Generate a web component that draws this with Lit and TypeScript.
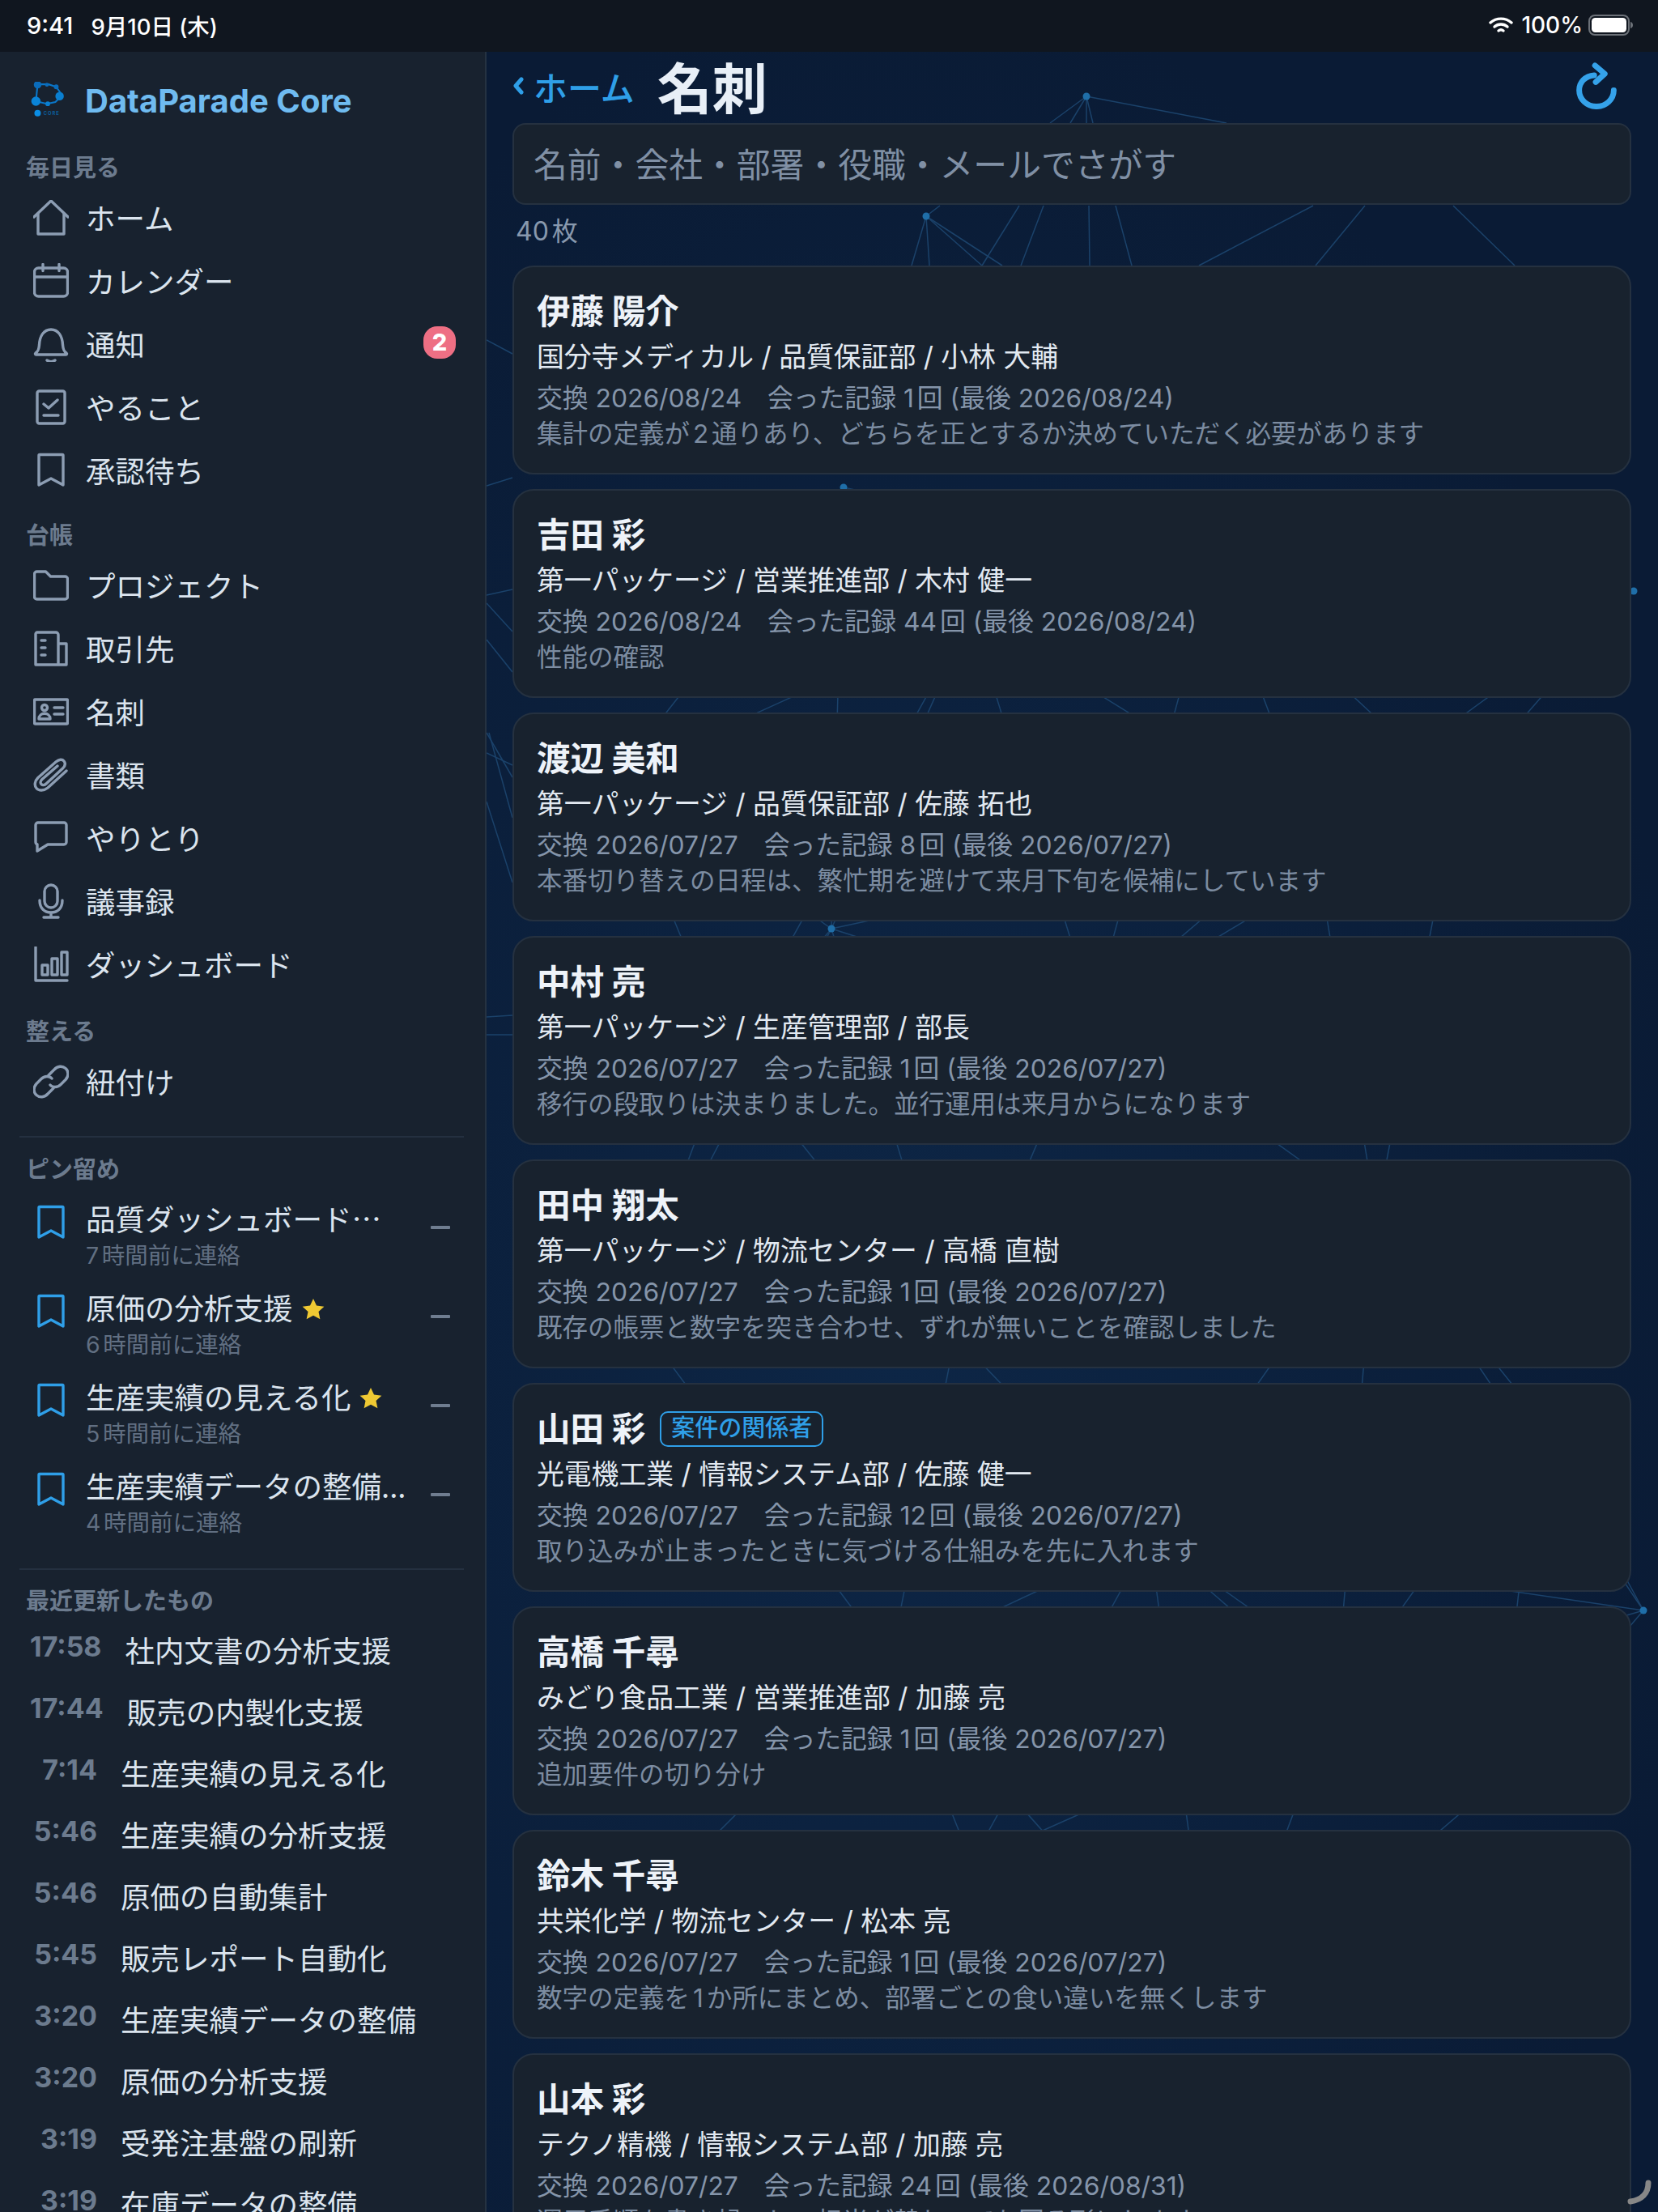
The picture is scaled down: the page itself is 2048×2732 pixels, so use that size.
import { LitElement, html, css, svg } from "lit";
import { customElement } from "lit/decorators.js";

const ic = (body: unknown) => html`<svg class="ic" viewBox="0 0 44 44" fill="none" stroke="currentColor" stroke-width="3.400" stroke-linecap="round" stroke-linejoin="round">${body}</svg>`;

const icons: Record<string, unknown> = {
  home: ic(svg`<path d="M1 21 22 1l21 20"/><path d="M6 17v25h32V17"/>`),
  calendar: ic(svg`<rect x="1.5" y="6" width="41" height="35" rx="5"/><path d="M1.5 17h41M12 1.5v8M32 1.5v8"/>`),
  bell: ic(svg`<path d="M3 33c3-2 4-4 4.500-10C8 12 13 4 22 4s14 8 14.500 19c.5 6 1.500 8 4.500 10 1 .8.500 2-.5 2H3.500c-1 0-1.500-1.200-.5-2z"/><path d="M17 42c3 2 7 2 10 0"/>`),
  todo: ic(svg`<rect x="5" y="2" width="34" height="40" rx="2.500"/><path d="M13 18l6 5 11-10M13 32h18"/>`),
  bookmark: ic(svg`<path d="M8 2.500h28a1 1 0 0 1 1 1V40l-15-8-15 8V3.500a1 1 0 0 1 1-1z"/>`),
  folder: ic(svg`<path d="M1.500 12V8a3 3 0 0 1 3-3h11l6 6h18a3 3 0 0 1 3 3v22a3 3 0 0 1-3 3H4.500a3 3 0 0 1-3-3z"/>`),
  building: ic(svg`<path d="M3 42V4a2 2 0 0 1 2-2h23a3 3 0 0 1 3 3v37zM31 16h10v26H31"/><path d="M10 12h5M10 21h5M10 30h5"/>`),
  card: ic(svg`<rect x="1.500" y="7" width="41" height="30" rx="1"/><circle cx="14" cy="17" r="3.500"/><path d="M7 31c0-9 14-9 14 0zM26 17h11M26 25h11"/>`),
  clip: ic(svg`<path d="M41 17 18 38c-5 4-11 4-14 .500s-2-9 2-13L28 6c4-3.500 8-3.500 10-1s1.500 6-1.500 9L16 33c-2 2-4.500 2-6 .5s-1-4 1-6L30 11"/>`),
  chat: ic(svg`<path d="M6 3h32a3 3 0 0 1 3 3v21a3 3 0 0 1-3 3H18L5 38v-8.200A3 3 0 0 1 3 27V6a3 3 0 0 1 3-3z"/>`),
  mic: ic(svg`<rect x="14" y="2" width="16" height="28" rx="8"/><path d="M8 21c0 10 6 15 14 15s14-5 14-15M22 36v6M13 42h18"/>`),
  chart: ic(svg`<path d="M3 1v41h39"/><rect x="11" y="23" width="7" height="12"/><rect x="23" y="15" width="7" height="20"/><rect x="35" y="7" width="7" height="28"/>`),
  link: ic(svg`<path d="M19 14l7-7c4-4.500 10-5 14-1.500s4 9.500 0 14l-6 6c-4 4-10 4-13 .5"/><path d="M25 30l-7 7c-4 4.500-10 5-14 1.500s-4-9.500 0-14l6-6c4-4 10-4 13-.5"/>`),
};

const logo = html`<svg class="logo" viewBox="0 0 40 44">
  <path d="M8 3h13l9 3 7 10-8 8-10 2-13-3L8 3z" fill="none" stroke="#0a77c9" stroke-width="2"/>
  <circle cx="8" cy="3.500" r="4.500" fill="#0a6cbb"/><circle cx="19" cy="3.500" r="2.200" fill="#0a6cbb"/><circle cx="30" cy="6" r="2.800" fill="#0a6cbb"/>
  <circle cx="34" cy="17" r="5" fill="#0a7fd0"/><circle cx="20" cy="26" r="2.800" fill="#0a7fd0"/><circle cx="6" cy="23" r="5.500" fill="#0a84d8"/>
  <circle cx="8" cy="37" r="3.800" fill="#0a8ee6"/>
  <text x="15" y="39.500" font-size="5.500" font-family="Inter" font-weight="700" letter-spacing="1" fill="#0b5f9e">CORE</text>
</svg>`;

const sections = [
  { label: "毎日見る", gap: 0, items: [["home", "ホーム"], ["calendar", "カレンダー"], ["bell", "通知", "2"], ["todo", "やること"], ["bookmark", "承認待ち"]] },
  { label: "台帳", gap: 18, items: [["folder", "プロジェクト"], ["building", "取引先"], ["card", "名刺"], ["clip", "書類"], ["chat", "やりとり"], ["mic", "議事録"], ["chart", "ダッシュボード"]] },
  { label: "整える", gap: 21, items: [["link", "紐付け"]] },
];

const pins = [
  { title: "品質ダッシュボード…", sub: "7時間前に連絡", star: false },
  { title: "原価の分析支援", sub: "6時間前に連絡", star: true },
  { title: "生産実績の見える化", sub: "5時間前に連絡", star: true },
  { title: "生産実績データの整備...", sub: "4時間前に連絡", star: false },
];

const recent = [
  ["17:58", "社内文書の分析支援"], ["17:44", "販売の内製化支援"], ["7:14", "生産実績の見える化"],
  ["5:46", "生産実績の分析支援"], ["5:46", "原価の自動集計"], ["5:45", "販売レポート自動化"],
  ["3:20", "生産実績データの整備"], ["3:20", "原価の分析支援"], ["3:19", "受発注基盤の刷新"], ["3:19", "在庫データの整備"],
];

const people = [
  { name: "伊藤 陽介", org: "国分寺メディカル / 品質保証部 / 小林 大輔", meta: "交換 2026/08/24　会った記録 1回 (最後 2026/08/24)", note: "集計の定義が2通りあり、どちらを正とするか決めていただく必要があります" },
  { name: "吉田 彩", org: "第一パッケージ / 営業推進部 / 木村 健一", meta: "交換 2026/08/24　会った記録 44回 (最後 2026/08/24)", note: "性能の確認" },
  { name: "渡辺 美和", org: "第一パッケージ / 品質保証部 / 佐藤 拓也", meta: "交換 2026/07/27　会った記録 8回 (最後 2026/07/27)", note: "本番切り替えの日程は、繁忙期を避けて来月下旬を候補にしています" },
  { name: "中村 亮", org: "第一パッケージ / 生産管理部 / 部長", meta: "交換 2026/07/27　会った記録 1回 (最後 2026/07/27)", note: "移行の段取りは決まりました。並行運用は来月からになります" },
  { name: "田中 翔太", org: "第一パッケージ / 物流センター / 高橋 直樹", meta: "交換 2026/07/27　会った記録 1回 (最後 2026/07/27)", note: "既存の帳票と数字を突き合わせ、ずれが無いことを確認しました" },
  { name: "山田 彩", tag: "案件の関係者", org: "光電機工業 / 情報システム部 / 佐藤 健一", meta: "交換 2026/07/27　会った記録 12回 (最後 2026/07/27)", note: "取り込みが止まったときに気づける仕組みを先に入れます" },
  { name: "高橋 千尋", org: "みどり食品工業 / 営業推進部 / 加藤 亮", meta: "交換 2026/07/27　会った記録 1回 (最後 2026/07/27)", note: "追加要件の切り分け" },
  { name: "鈴木 千尋", org: "共栄化学 / 物流センター / 松本 亮", meta: "交換 2026/07/27　会った記録 1回 (最後 2026/07/27)", note: "数字の定義を1か所にまとめ、部署ごとの食い違いを無くします" },
  { name: "山本 彩", org: "テクノ精機 / 情報システム部 / 加藤 亮", meta: "交換 2026/07/27　会った記録 24回 (最後 2026/08/31)", note: "運用手順を書き起こし、担当が替わっても回る形にします" },
];

// background network, in page coordinates
const topLines = [
  [1342, 119, 1297, 152], [1342, 119, 1322, 152], [1342, 119, 1342, 152], [1342, 119, 1350, 152], [1342, 119, 1515, 152],
  [1144, 267, 1161, 254], [1144, 267, 1126, 328], [1144, 267, 1148, 328], [1144, 267, 1213, 328], [1144, 267, 1238, 328],
  [1259, 254, 1213, 328], [1289, 254, 1261, 328], [1345, 254, 1346, 328], [1378, 254, 1398, 328],
  [1622, 254, 1481, 328], [1686, 254, 1625, 328], [1795, 254, 1871, 328],
  [601, 420, 633, 437], [601, 600, 633, 590], [601, 735, 633, 728], [601, 745, 633, 780],
  [601, 790, 633, 830], [601, 905, 633, 960], [604, 905, 633, 1010], [601, 930, 633, 945], [601, 990, 633, 1090],
  [601, 1256, 633, 1254], [601, 1278, 633, 1278],
];
const nodes = [
  [1042, 602], [1027, 1147], [2018, 730], [2030, 1989], [1200, 760], [1500, 700], [1800, 980], [760, 960], [900, 1300],
  [1350, 1250], [1700, 1500], [1180, 1650], [1420, 1900], [780, 1620], [1850, 2200], [1200, 2300], [1500, 2500],
  [800, 2350], [1900, 1750], [1100, 2050], [1650, 2100], [1620, 1020],
];
const edges: number[][] = [];
nodes.forEach((a, i) => nodes.forEach((b, j) => {
  if (j > i && Math.hypot(a[0] - b[0], a[1] - b[1]) < 620) edges.push([a[0], a[1], b[0], b[1]]);
}));

const net = html`<svg class="net" viewBox="601 64 1447 2668">
  ${[...topLines, ...edges].map(l => svg`<line x1=${l[0]} y1=${l[1]} x2=${l[2]} y2=${l[3]} stroke="#1b426a" stroke-width="1.500"/>`)}
  ${[...nodes, [1342, 119], [1144, 267]].map(n => svg`<circle cx=${n[0]} cy=${n[1]} r="4.500" fill="#1f6ea8"/>`)}
</svg>`;

@customElement("app-root")
export class AppRoot extends LitElement {
  static styles = css`
    :host {
      display: block;
      width: 2048px;
      height: 2732px;
      overflow: hidden;
      position: relative;
      font-family: Inter, "Noto Sans CJK JP", sans-serif;
      color: #e6edf5;
      background: #0b1d38;
      text-autospace: normal;
    }
    .status {
      height: 64px;
      box-sizing: border-box;
      background: #10161f;
      display: flex;
      align-items: center;
      padding: 0 30px 2px 33px;
      font-size: 29px;
      font-weight: 500;
      color: #fff;
      text-autospace: no-autospace;
    }
    .status .date { margin-left: 22px; font-size: 27.500px; }
    .status .right { margin-left: auto; display: flex; align-items: center; gap: 10px; font-size: 28px; }
    .battery { margin-left: -3px; }
    .body { display: flex; height: 2668px; }

    .side {
      width: 599px;
      flex: none;
      background: #18222f;
      border-right: 2px solid #253241;
      overflow: hidden;
    }
    .brand { height: 120px; display: flex; align-items: center; padding-left: 38px; gap: 25px; }
    .logo { width: 42px; height: 46px; }
    .brand span { font-size: 40px; font-weight: 700; color: #6fbbf0; }
    .label {
      height: 46px;
      line-height: 48px;
      padding-left: 32px;
      font-size: 29px;
      font-weight: 700;
      color: #6c7b8e;
    }
    .label.tail { margin-bottom: -1px; }
    .row {
      height: 78px;
      box-sizing: border-box;
      display: flex;
      align-items: center;
      padding: 0 36px 2px 41px;
      font-size: 36.500px;
      color: #dbe4ee;
    }
    .row .ic { margin-top: 2px; }
    .ic { width: 44px; height: 44px; color: #8c9db3; flex: none; margin-right: 21px; }
    .badge {
      margin-left: auto;
      width: 40px;
      height: 40px;
      border-radius: 17px;
      background: #ee6f84;
      color: #fff;
      font-size: 29px;
      font-weight: 800;
      display: flex;
      align-items: center;
      justify-content: center;
      margin-top: -3px;
    }
    .rule { height: 2px; background: #243040; margin: 28px 26px 16px 24px; }
    .rule.tight { margin-top: 16px; margin-bottom: 15px; }
    .pins { padding-top: 14px; }
    .pin { height: 110px; display: flex; padding: 0 43px 0 41px; }
    .pin .ic { color: #2f9fe8; margin-top: 7px; }
    .pin .text { flex: 1; min-width: 0; }
    .pin .title {
      height: 52px;
      box-sizing: border-box;
      padding-bottom: 4px;
      line-height: 48px;
      font-family: "Noto Sans CJK JP", sans-serif;
      font-size: 36.500px;
      color: #dbe4ee;
      white-space: nowrap;
      display: flex;
      align-items: center;
      gap: 10px;
    }
    .pin .sub { height: 36px; line-height: 36px; font-size: 28.500px; color: #616f82; }
    .star { width: 30px; height: 30px; flex: none; margin-top: 4px; }
    .minus { width: 24px; height: 4px; border-radius: 1px; background: #6f7d90; margin-top: 33px; flex: none; }
    .recent {
      height: 76px;
      display: flex;
      align-items: center;
      padding-left: 37px;
      font-size: 36.500px;
      color: #dbe4ee;
      gap: 29px;
      white-space: nowrap;
    }
    .recent .time {
      min-width: 83px;
      text-align: right;
      font-size: 34px;
      font-weight: 700;
      color: #6c7b8e;
      margin-top: -8px;
    }

    .main {
      flex: 1;
      min-width: 0;
      position: relative;
      padding: 0 33px 0 32px;
      background: radial-gradient(ellipse at 35% 60%, #0d2646 0%, #0a1b35 75%);
      overflow: hidden;
    }
    .net { position: absolute; left: 0; top: 0; width: 1447px; height: 2668px; }
    .content { position: relative; }
    .head { height: 88px; display: flex; align-items: center; }
    .back { font-size: 42px; font-weight: 500; color: #2f9fe8; display: flex; align-items: center; gap: 12px; margin-right: 28px; margin-top: -4px; }
    .head h1 { margin: 0; font-size: 68px; font-weight: 700; color: #e8eff7; margin-top: -6px; }
    .refresh { margin-left: auto; width: 52px; height: 58px; margin-right: 17px; margin-top: -4px; }
    .search {
      height: 101px;
      box-sizing: border-box;
      border: 2px solid #253140;
      border-radius: 16px;
      background: #18222e;
      display: flex;
      align-items: center;
      padding: 0 0 3px 24px;
      font-size: 41.800px;
      color: #8090a5;
    }
    .count { height: 75px; padding: 0 0 0 4px; line-height: 66px; font-size: 32px; color: #8898ad; }
    .cards { display: flex; flex-direction: column; gap: 18px; }
    .card {
      height: 258px;
      box-sizing: border-box;
      border: 2px solid #253140;
      border-radius: 26px;
      background: #18222e;
      padding: 25px 28px 0;
      white-space: nowrap;
    }
    .name { height: 60px; line-height: 60px; font-size: 41.500px; font-weight: 700; color: #eef3f9; display: flex; align-items: center; gap: 18px; }
    .tag {
      height: 44px;
      box-sizing: border-box;
      border: 2px solid #2f9fe8;
      border-radius: 10px;
      padding: 0 12px;
      font-size: 29px;
      font-weight: 500;
      line-height: 38px;
      color: #2f9fe8;
    }
    .org { height: 52px; line-height: 52px; font-size: 33.800px; color: #e2e9f1; }
    .meta { height: 48px; line-height: 50px; font-size: 31.800px; color: #8595aa; }
    .note { height: 40px; line-height: 42px; font-size: 31.500px; color: #7c8ca1; }
    .corner { position: absolute; right: 8px; bottom: 8px; width: 32px; height: 32px; }
  `;

  render() {
    return html`
      <div class="status">
        <span>9:41</span><span class="date">9月10日 (木)</span>
        <span class="right">
          <svg width="30" height="22" viewBox="0 0 30 22" fill="none" stroke="#fff" stroke-width="3.400" stroke-linecap="round">
            <path d="M2 8c7.500-6.500 18.500-6.500 26 0"/><path d="M7 13c4.500-4 11.500-4 16 0"/><path d="M12 18c1.800-1.400 4.200-1.400 6 0"/>
          </svg>
          <span>100%</span>
          <svg class="battery" width="56" height="26" viewBox="0 0 56 26">
            <rect x="1" y="1" width="49" height="24" rx="7" fill="none" stroke="#6c7178" stroke-width="2"/>
            <rect x="4" y="4" width="43" height="18" rx="4.500" fill="#fff"/>
            <path d="M52 9c2 .5 3 2 3 4s-1 3.500-3 4z" fill="#6c7178"/>
          </svg>
        </span>
      </div>
      <div class="body">
        <nav class="side">
          <div class="brand">${logo}<span>DataParade Core</span></div>
          ${sections.map(s => html`
            <div class="label" style="margin-top:${s.gap}px">${s.label}</div>
            ${s.items.map(i => html`
              <div class="row">${icons[i[0]]}<span>${i[1]}</span>${i[2] ? html`<span class="badge">${i[2]}</span>` : ""}</div>
            `)}
          `)}
          <div class="rule"></div>
          <div class="label">ピン留め</div>
          <div class="pins">
            ${pins.map(p => html`
              <div class="pin">
                ${icons.bookmark}
                <div class="text">
                  <div class="title"><span>${p.title}</span>${p.star ? html`<svg class="star" viewBox="0 0 24 24"><path d="M12 1.500l3.200 6.900 7.500.9-5.500 5.100 1.500 7.400L12 18.100l-6.700 3.700 1.500-7.400L1.300 9.300l7.500-.9z" fill="#efc933"/></svg>` : ""}</div>
                  <div class="sub">${p.sub}</div>
                </div>
                <div class="minus"></div>
              </div>
            `)}
          </div>
          <div class="rule tight"></div>
          <div class="label tail">最近更新したもの</div>
          ${recent.map(r => html`<div class="recent"><span class="time">${r[0]}</span><span>${r[1]}</span></div>`)}
        </nav>
        <main class="main">
          ${net}
          <div class="content">
            <div class="head">
              <span class="back">
                <svg width="14" height="24" viewBox="0 0 14 24" fill="none" stroke="#2f9fe8" stroke-width="5" stroke-linecap="round" stroke-linejoin="round"><path d="M11 4 4 12l7 8"/></svg>
                <span>ホーム</span>
              </span>
              <h1>名刺</h1>
              <svg class="refresh" viewBox="0 0 56 62" fill="none" stroke="#35a2ea" stroke-width="7.500" stroke-linecap="round" stroke-linejoin="round">
                <path d="M25 17C13 18 5 26 5 37a23 21.500 0 1 0 46 0"/><path d="M26 4l13 11-12 11"/>
              </svg>
            </div>
            <div class="search">名前・会社・部署・役職・メールでさがす</div>
            <div class="count">40枚</div>
            <div class="cards">
              ${people.map(p => html`
                <div class="card">
                  <div class="name"><span>${p.name}</span>${p.tag ? html`<span class="tag">${p.tag}</span>` : ""}</div>
                  <div class="org">${p.org}</div>
                  <div class="meta">${p.meta}</div>
                  <div class="note">${p.note}</div>
                </div>
              `)}
            </div>
          </div>
          <svg class="corner" viewBox="0 0 32 32" fill="none" stroke="#878787" stroke-width="7" stroke-linecap="round"><path d="M28 4c0 13-8 21-22 23"/></svg>
        </main>
      </div>
    `;
  }
}
